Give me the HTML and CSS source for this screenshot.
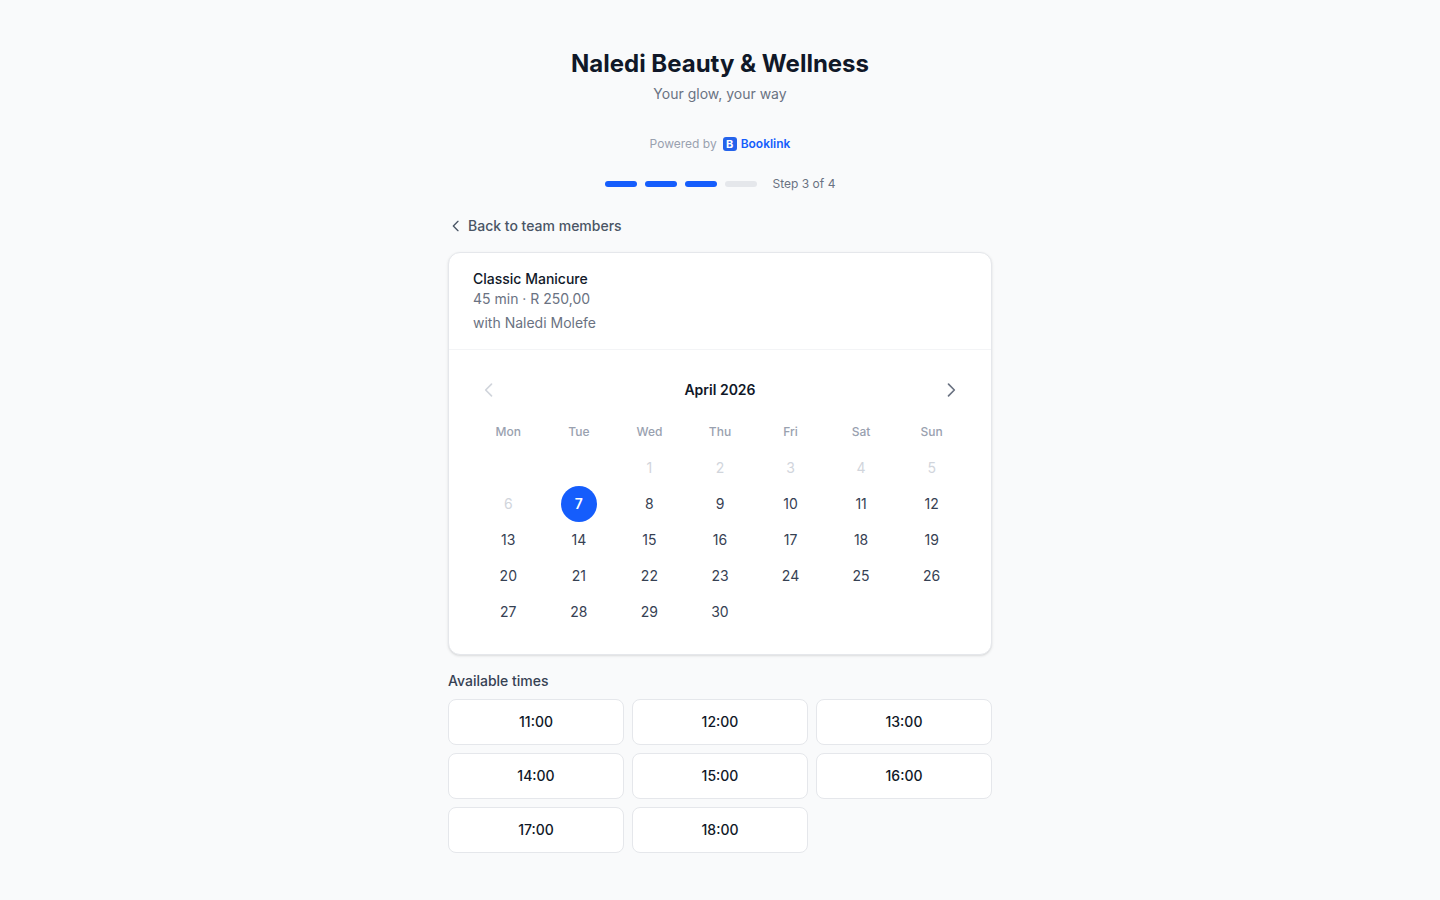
FILE: index.html
```html
<!DOCTYPE html>
<html lang="en">
<head>
    <meta charset="UTF-8">
    <meta name="viewport" content="width=device-width, initial-scale=1.0">
    <title>Naledi Beauty &amp; Wellness</title>
    <link rel="stylesheet" href="styles.css">
</head>
<body>
    <div class="container">
        <header class="header">
            <h1>Naledi Beauty &amp; Wellness</h1>
            <p class="tagline">Your glow, your way</p>
        </header>

        <div class="powered-by">
            <span>Powered by</span>
            <a href="#" class="brand"><span class="brand-logo" aria-hidden="true">B</span>Booklink</a>
        </div>

        <div class="steps">
            <span class="step done"></span>
            <span class="step done"></span>
            <span class="step done"></span>
            <span class="step"></span>
            <span class="step-label">Step 3 of 4</span>
        </div>

        <main>
            <button type="button" class="back-btn">
                <svg class="icon-sm" viewBox="0 0 24 24" aria-hidden="true"><path d="M15 19l-7-7 7-7"/></svg>
                Back to team members
            </button>

            <section class="card">
                <div class="service">
                    <h2>Classic Manicure</h2>
                    <p>45 min · R 250,00</p>
                    <p class="staff">with Naledi Molefe</p>
                </div>

                <div class="calendar">
                    <div class="calendar-nav">
                        <button type="button" class="nav-btn" aria-label="Previous month" disabled>
                            <svg class="icon" viewBox="0 0 24 24"><path d="M15 19l-7-7 7-7"/></svg>
                        </button>
                        <h3>April 2026</h3>
                        <button type="button" class="nav-btn" aria-label="Next month">
                            <svg class="icon" viewBox="0 0 24 24"><path d="M9 5l7 7-7 7"/></svg>
                        </button>
                    </div>

                    <table class="days">
                        <thead>
                            <tr>
                                <th>Mon</th>
                                <th>Tue</th>
                                <th>Wed</th>
                                <th>Thu</th>
                                <th>Fri</th>
                                <th>Sat</th>
                                <th>Sun</th>
                            </tr>
                        </thead>
                        <tbody id="days"></tbody>
                    </table>
                </div>
            </section>

            <h2 class="section-title">Available times</h2>
            <div class="times">
                <button type="button" class="time">11:00</button>
                <button type="button" class="time">12:00</button>
                <button type="button" class="time">13:00</button>
                <button type="button" class="time">14:00</button>
                <button type="button" class="time">15:00</button>
                <button type="button" class="time">16:00</button>
                <button type="button" class="time">17:00</button>
                <button type="button" class="time">18:00</button>
            </div>
        </main>
    </div>

    <script>
        const today = 7;
        const daysInMonth = 30;
        const offset = 2; // April 2026 starts on a Wednesday
        let selected = 7;

        function renderDays() {
            const body = document.getElementById('days');
            body.innerHTML = '';

            for (let start = 1 - offset; start <= daysInMonth; start += 7) {
                const row = body.insertRow();
                for (let day = start; day < start + 7; day++) {
                    const cell = row.insertCell();
                    if (day < 1 || day > daysInMonth) continue;

                    const btn = document.createElement('button');
                    btn.type = 'button';
                    btn.className = `day ${day === selected ? 'selected' : ''}`;
                    btn.textContent = day;
                    btn.disabled = day < today;
                    btn.onclick = () => {
                        selected = day;
                        renderDays();
                    };
                    cell.appendChild(btn);
                }
            }
        }

        renderDays();
    </script>
</body>
</html>
```
FILE: styles.css
```css
:root {
    --primary: #155dfc;
    --gray-50: #f9fafb;
    --gray-100: #f3f4f6;
    --gray-200: #e5e7eb;
    --gray-300: #d1d5dc;
    --gray-400: #99a1af;
    --gray-500: #6a7282;
    --gray-600: #4a5565;
    --gray-700: #364153;
    --gray-900: #101828;
}

* {
    box-sizing: border-box;
    margin: 0;
    padding: 0;
}

body {
    font-family: Inter, "Liberation Sans", sans-serif;
    font-size: 14px;
    line-height: 20px;
    background-color: var(--gray-50);
    color: var(--gray-900);
}

button {
    font: inherit;
    color: inherit;
    background: none;
    border: none;
    cursor: pointer;
}

.container {
    max-width: 576px;
    margin: 0 auto;
    padding: 48px 16px 32px;
}

.header {
    text-align: center;
    margin-bottom: 32px;
}

h1 {
    font-size: 24px;
    line-height: 32px;
    font-weight: 700;
}

.tagline {
    margin-top: 4px;
    color: var(--gray-500);
}

.powered-by {
    display: flex;
    align-items: center;
    justify-content: center;
    gap: 6px;
    margin-bottom: 24px;
    font-size: 12px;
    line-height: 16px;
    color: var(--gray-400);
}

.brand {
    display: flex;
    align-items: center;
    gap: 4px;
    font-weight: 600;
    color: var(--primary);
    text-decoration: none;
}

.brand-logo {
    width: 14px;
    height: 14px;
    border-radius: 3px;
    background-color: #2563eb;
    color: white;
    font-size: 11px;
    line-height: 14px;
    font-weight: 700;
    text-align: center;
}

.steps {
    display: flex;
    align-items: center;
    justify-content: center;
    gap: 8px;
    margin-bottom: 24px;
}

.step {
    width: 32px;
    height: 6px;
    border-radius: 3px;
    background-color: var(--gray-200);
}

.step.done {
    background-color: var(--primary);
}

.step-label {
    margin-left: 8px;
    font-size: 12px;
    line-height: 16px;
    color: var(--gray-500);
}

.back-btn {
    display: flex;
    align-items: center;
    gap: 4px;
    margin-bottom: 16px;
    font-weight: 500;
    color: var(--gray-600);
}

.back-btn:hover {
    color: var(--gray-900);
}

svg {
    display: block;
    fill: none;
    stroke: currentColor;
    stroke-width: 2;
    stroke-linecap: round;
    stroke-linejoin: round;
}

.icon-sm {
    width: 16px;
    height: 16px;
}

.icon {
    width: 20px;
    height: 20px;
}

.card {
    background-color: white;
    border: 1px solid var(--gray-200);
    border-radius: 12px;
    box-shadow: 0 1px 3px rgba(0, 0, 0, 0.1), 0 1px 2px -1px rgba(0, 0, 0, 0.1);
}

.service {
    padding: 16px 24px;
    border-bottom: 1px solid var(--gray-100);
    color: var(--gray-500);
}

.service h2 {
    font-size: 14px;
    font-weight: 500;
    color: var(--gray-900);
}

.staff {
    margin-top: 4px;
}

.calendar {
    padding: 24px;
}

.calendar-nav {
    display: flex;
    align-items: center;
    justify-content: space-between;
    margin-bottom: 8px;
}

.calendar-nav h3 {
    font-size: 14px;
    font-weight: 600;
}

.nav-btn {
    padding: 6px;
    border-radius: 8px;
    color: var(--gray-500);
}

.nav-btn:disabled {
    color: var(--gray-300);
    cursor: default;
}

.days {
    width: 100%;
    table-layout: fixed;
    border-collapse: collapse;
}

.days th {
    height: 36px;
    font-size: 12px;
    line-height: 16px;
    font-weight: 500;
    color: var(--gray-400);
}

.day {
    display: block;
    width: 36px;
    height: 36px;
    margin: 0 auto;
    border-radius: 50%;
    color: var(--gray-700);
}

.day:hover {
    background-color: var(--gray-100);
}

.day:disabled {
    background: none;
    color: var(--gray-300);
    cursor: default;
}

.day.selected {
    background-color: var(--primary);
    color: white;
    font-weight: 600;
}

.section-title {
    margin: 16px 0 8px;
    font-size: 14px;
    font-weight: 500;
    color: var(--gray-700);
}

.times {
    display: grid;
    grid-template-columns: repeat(3, 1fr);
    gap: 8px;
}

.time {
    padding: 12px;
    background-color: white;
    border: 1px solid var(--gray-200);
    border-radius: 8px;
    font-weight: 500;
}

.time:hover {
    border-color: var(--primary);
}
```
